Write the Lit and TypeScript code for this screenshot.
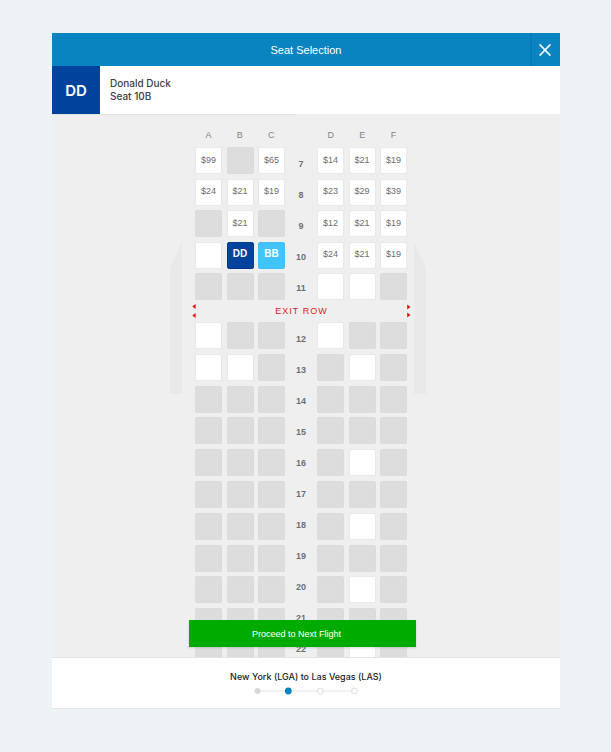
import { LitElement, html, css, svg, nothing } from "lit";
import { customElement, property } from "lit/decorators.js";
import { classMap } from "lit/directives/class-map.js";

/* Seat codes: "x" taken, "" free, "$n" free at a price, anything else a passenger's initials. */
type Row = { number: number; seats: string[] };

const FRONT: Row[] = [
  { number: 7, seats: ["$99", "x", "$65", "$14", "$21", "$19"] },
  { number: 8, seats: ["$24", "$21", "$19", "$23", "$29", "$39"] },
  { number: 9, seats: ["x", "$21", "x", "$12", "$21", "$19"] },
  { number: 10, seats: ["", "DD", "BB", "$24", "$21", "$19"] },
  { number: 11, seats: ["x", "x", "x", "", "", "x"] },
];

const BACK: Row[] = [
  { number: 12, seats: ["", "x", "x", "", "x", "x"] },
  { number: 13, seats: ["", "", "x", "x", "", "x"] },
  { number: 14, seats: ["x", "x", "x", "x", "x", "x"] },
  { number: 15, seats: ["x", "x", "x", "x", "x", "x"] },
  { number: 16, seats: ["x", "x", "x", "x", "", "x"] },
  { number: 17, seats: ["x", "x", "x", "x", "x", "x"] },
  { number: 18, seats: ["x", "x", "x", "x", "", "x"] },
  { number: 19, seats: ["x", "x", "x", "x", "x", "x"] },
  { number: 20, seats: ["x", "x", "x", "x", "", "x"] },
  { number: 21, seats: ["x", "x", "x", "x", "x", "x"] },
  { number: 22, seats: ["x", "x", "x", "x", "", "x"] },
];

const LETTERS = ["A", "B", "C", "D", "E", "F"];

@customElement("seat-section")
export class SeatSection extends LitElement {
  @property({ attribute: false }) rows: Row[] = [];

  static styles = css`
    :host {
      display: grid;
      grid-template-columns: 90px 32px 90px;
      grid-template-rows: 100%;
    }
    .side {
      display: grid;
      grid-template-columns: repeat(3, 27px);
      grid-auto-rows: 27px;
      justify-content: space-between;
      align-content: space-between;
    }
    .numbers {
      display: grid;
      grid-auto-rows: 31px;
      padding-top: 1px;
      place-items: center;
      font-size: 9px;
      font-weight: bold;
      color: #707070;
    }
    .seat {
      box-sizing: border-box;
      margin: 0;
      padding: 0 0 2px;
      border: 1px solid #e9e9e9;
      border-radius: 2px;
      background: #fff;
      font: 9px/12px "Liberation Sans", Arial, sans-serif;
      color: #6c6c6c;
      cursor: pointer;
    }
    .taken {
      background: #ddd;
      border-color: #dbdbdb;
      cursor: default;
    }
    .mine,
    .other {
      font-size: 10px;
      font-weight: bold;
      color: #fff;
    }
    .mine {
      background: #00439c;
      border-color: #003c90;
    }
    .other {
      background: #40c4ff;
      border-color: #40c0fa;
    }
  `;

  private side(from: number) {
    return html`<div class="side">
      ${this.rows.map((row) =>
        row.seats.slice(from, from + 3).map((code, i) => {
          const taken = code === "x";
          return html`<button
            type="button"
            class=${classMap({
              seat: true,
              taken,
              mine: code === "DD",
              other: code === "BB",
            })}
            ?disabled=${taken}
            aria-label=${`Seat ${row.number}${LETTERS[from + i]}`}
          >${taken ? nothing : code}</button>`;
        })
      )}
    </div>`;
  }

  render() {
    return html`
      ${this.side(0)}
      <div class="numbers">${this.rows.map((r) => html`<span>${r.number}</span>`)}</div>
      ${this.side(3)}
    `;
  }
}

@customElement("app-root")
export class AppRoot extends LitElement {
  static styles = css`
    :host {
      display: block;
      box-sizing: border-box;
      height: 100vh;
      padding: 33px 51px 43px 52px;
      background: #edf2f5;
      font-family: "Liberation Sans", Arial, sans-serif;
    }
    .panel {
      display: flex;
      flex-direction: column;
      height: 100%;
      background: #efefef;
    }
    .bar {
      display: grid;
      grid-template-columns: 30px 1fr 30px;
      height: 33px;
      flex: none;
      background: #0a84c1;
      color: #fff;
    }
    .title {
      grid-column: 2;
      margin: 0;
      font-size: 11px;
      font-weight: normal;
      line-height: 34px;
      text-align: center;
    }
    .close {
      display: grid;
      place-items: center;
      margin: 0;
      padding: 0 2px 0 0;
      border: 0;
      border-left: 2px solid #0878b7;
      background: none;
      color: #fff;
      cursor: pointer;
    }
    .passenger {
      display: flex;
      flex: none;
      height: 48px;
      background: #fff;
    }
    .avatar {
      display: grid;
      place-items: center;
      width: 48px;
      background: #00439c;
      color: #fff;
      font-family: Inter, sans-serif;
      font-size: 15px;
      font-weight: 600;
    }
    .who {
      margin: 11px 0 0 10px;
      font-family: Inter, sans-serif;
      font-size: 10px;
      font-weight: 500;
      line-height: 13px;
      color: #404040;
    }
    .who p {
      margin: 0;
    }
    .progress {
      flex: none;
      width: 48%;
      height: 1px;
      background: #e2e2e2;
    }
    .map {
      position: relative;
      flex: 1;
      min-height: 0;
      display: flex;
    }
    .scroll {
      flex: 1;
      overflow-y: auto;
      scrollbar-width: none;
      padding-right: 10px;
    }
    .cabin {
      position: relative;
      width: 212px;
      margin: 0 auto;
      padding-top: 13px;
    }
    .letters {
      display: grid;
      grid-template-columns: 27px 27px 27px 24px 27px 27px 27px;
      justify-content: space-between;
      height: 19px;
      font-size: 9px;
      line-height: 14px;
      text-align: center;
      color: #858585;
    }
    .letter:nth-child(4) {
      grid-column: 5;
    }
    .front {
      height: 153px;
    }
    .back {
      height: 345px;
    }
    .exit {
      display: flex;
      align-items: center;
      justify-content: space-between;
      height: 22px;
      margin: 0 -4px 0 -3px;
      font-size: 9px;
      line-height: 10px;
      letter-spacing: 1px;
      color: #e3221c;
    }
    .wing {
      position: absolute;
      top: 127px;
      fill: #e9e9e9;
    }
    .left {
      right: 100%;
      margin-right: 13px;
    }
    .right {
      left: 100%;
      margin-left: 7px;
    }
    .proceed {
      position: absolute;
      left: 0;
      right: 7px;
      bottom: 10px;
      width: 227px;
      height: 27px;
      margin: 0 auto;
      padding: 0 12px 0 0;
      border: 0;
      background: #00ab00;
      color: #fff;
      font: 9px/12px "Liberation Sans", Arial, sans-serif;
      box-shadow: 0 1px 2px #0002;
      cursor: pointer;
    }
    .trip {
      display: flex;
      flex: none;
      flex-direction: column;
      align-items: center;
      gap: 3px;
      height: 52px;
      box-sizing: border-box;
      padding-top: 12px;
      border-top: 1px solid #e2e2e2;
      border-bottom: 1px solid #e3e7e9;
      background: #fff;
    }
    .route {
      margin: 0;
      font-family: Inter, sans-serif;
      font-size: 9px;
      font-weight: 500;
      line-height: 14px;
      color: #222;
    }
  `;

  private arrows(points: string) {
    return html`<svg width="5" height="14" viewBox="0 0 5 14" aria-hidden="true" fill="#e3120c">
      ${svg`<path d=${points} />`}
    </svg>`;
  }

  render() {
    return html`
      <main class="panel">
        <header class="bar">
          <h1 class="title">Seat Selection</h1>
          <button class="close" type="button" aria-label="Close">
            <svg width="12" height="12" viewBox="0 0 12 12" stroke="#fff" stroke-width="1.6">
              <path d="M.6 .4 11.4 11.6M11.4 .4 .6 11.6" />
            </svg>
          </button>
        </header>
        <section class="passenger">
          <div class="avatar">DD</div>
          <div class="who">
            <p>Donald Duck</p>
            <p>Seat 10B</p>
          </div>
        </section>
        <div class="progress"></div>
        <section class="map">
          <div class="scroll">
            <div class="cabin">
              <svg class="wing left" width="12" height="152" viewBox="0 0 12 152" aria-hidden="true">
                <path d="M12 0V152H0V26Z" />
              </svg>
              <svg class="wing right" width="12" height="152" viewBox="0 0 12 152" aria-hidden="true">
                <path d="M0 0V152H12V26Z" />
              </svg>
              <div class="letters">
                ${LETTERS.map((l) => html`<span class="letter">${l}</span>`)}
              </div>
              <seat-section class="front" .rows=${FRONT}></seat-section>
              <div class="exit">
                ${this.arrows("M3.6 0V5L.3 2.5ZM3.6 9V14L.3 11.5Z")}
                <span>EXIT ROW</span>
                ${this.arrows("M1.2 .5V5.5L4.5 3ZM1.2 8.5V13.5L4.5 11Z")}
              </div>
              <seat-section class="back" .rows=${BACK}></seat-section>
            </div>
          </div>
          <button class="proceed" type="button">Proceed to Next Flight</button>
        </section>
        <footer class="trip">
          <h2 class="route">New York (LGA) to Las Vegas (LAS)</h2>
          <svg width="106" height="8" viewBox="0 0 106 8" role="img" aria-label="Flight 2 of 4">
            <path d="M4 4H102" stroke="#e4e4e4" />
            <circle cx="4.5" cy="4" r="3" fill="#d8d8d8" />
            <circle cx="35.3" cy="4" r="3.4" fill="#0a84c1" />
            <circle cx="67.2" cy="4" r="2.9" fill="#fff" stroke="#dedede" />
            <circle cx="101.5" cy="4" r="2.9" fill="#fff" stroke="#dedede" />
          </svg>
        </footer>
      </main>
    `;
  }
}
